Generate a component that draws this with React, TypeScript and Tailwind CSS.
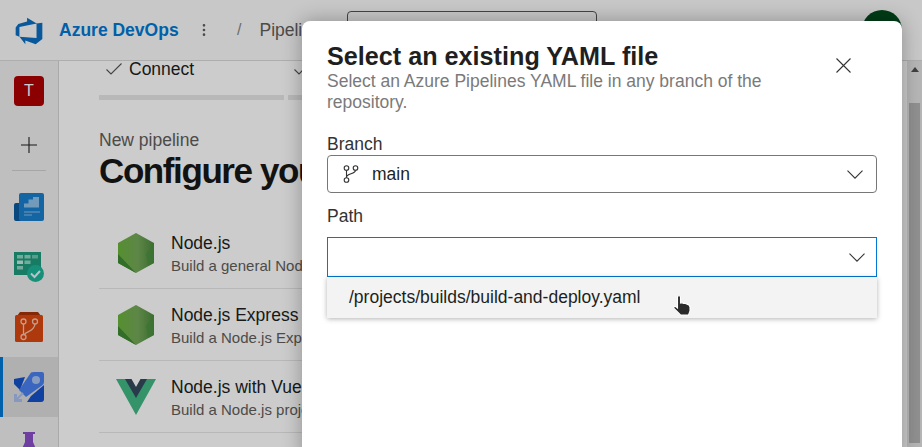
import { EllipsisVertical } from "lucide-react"

const templates = [
  { title: "Node.js", sub: "Build a general Node.js project with npm.", icon: "node" },
  { title: "Node.js Express Web App", sub: "Build a Node.js Express web app.", icon: "node" },
  { title: "Node.js with Vue", sub: "Build a Node.js project that uses Vue.", icon: "vue" },
]

function AzureLogo() {
  return (
    <svg width="30" height="30" viewBox="0 0 18 18">
      <path d="M17 4v9.740l-4 3.280-6.200-2.260V17L3.290 12.410l10.230.8V4.440zm-3.410.49L7.850 1v2.290L2.580 4.840 1 6.870v4.610l2.260 1V6.570z" fill="#0a6fc2" />
    </svg>
  )
}

function NodeIcon() {
  return (
    <svg width="36" height="40" viewBox="0 0 36 40">
      <defs>
        <linearGradient id="nodeg" x1="0" x2="1" y1="0" y2="0">
          <stop offset="0" stopColor="#6bb43c" />
          <stop offset="0.55" stopColor="#75a85a" />
          <stop offset="1" stopColor="#4b8a3c" />
        </linearGradient>
      </defs>
      <path d="M18 0 36 10v20L18 40 0 30V10z" fill="url(#nodeg)" />
      <path d="M0 21 18 40 0 30z" fill="#3f8a35" />
      <path d="M36 10v20l-6 3-2-12z" fill="#4a9040" opacity="0.7" />
    </svg>
  )
}

function VueIcon() {
  return (
    <svg width="40" height="36" viewBox="0 0 40 36">
      <path d="M0 0h15l5 9 5-9h15L20 36z" fill="#41b883" />
      <path d="M9 0h6.500L20 8l4.500-8H31L20 19z" fill="#34495e" />
    </svg>
  )
}

function Boards() {
  return (
    <svg width="30" height="28" viewBox="0 0 30 28">
      <rect x="0" y="10" width="12" height="18" rx="2" fill="#0a5a9e" />
      <rect x="5" y="0" width="25" height="28" rx="2" fill="#1a7fcc" />
      <path d="M10 14.500v-4h4.500V6.500h4.500V4h6v10.500z" fill="#8fc2ea" />
      <path d="M10 19h16M10 22h8" stroke="#8fc2ea" strokeWidth="1.200" />
    </svg>
  )
}

function TestBoard() {
  return (
    <svg width="30" height="30" viewBox="0 0 30 30">
      <rect x="0" y="0" width="27" height="23" fill="#1f9c7e" />
      <rect x="3" y="3" width="6" height="3.500" fill="#8fd6c2" />
      <rect x="10.500" y="3" width="6" height="3.500" fill="#8fd6c2" />
      <rect x="18" y="3" width="6" height="3.500" fill="#6cc6ae" />
      <rect x="3" y="8.500" width="6" height="3.500" fill="#c4ece0" />
      <rect x="10.500" y="8.500" width="6" height="3.500" fill="#8fd6c2" />
      <rect x="3" y="14" width="6" height="3.500" fill="#8fd6c2" />
      <circle cx="21.500" cy="21.500" r="8.500" fill="#1cb598" />
      <path d="m17 21.500 3.500 3.500 5.500-6" fill="none" stroke="#eef" strokeWidth="2" />
    </svg>
  )
}

function Repos() {
  return (
    <svg width="28" height="30" viewBox="0 0 28 30">
      <path d="M5 0h18l3 4v3H2V4z" fill="#a83208" />
      <rect x="0" y="3" width="28" height="27" rx="1.500" fill="#d9480f" />
      <g fill="none" stroke="#f6c4ad" strokeWidth="1.300">
        <circle cx="8.500" cy="9.500" r="2.500" />
        <circle cx="20" cy="9.500" r="2.500" />
        <circle cx="8.500" cy="25" r="2.500" />
        <path d="M8.500 12v10.500M9.500 22.500c1-3 10-3 10.500-10.500" />
      </g>
    </svg>
  )
}

function Pipelines() {
  return (
    <svg width="30" height="30" viewBox="0 0 30 30">
      <path d="M0 7 11 5 6 18 0 12z" fill="#1450c8" />
      <path d="M13 30h14q3 0 3-3V13L17 24z" fill="#1450c8" />
      <path d="M17 .5Q18 0 20 0h8q2 0 2 2v8q0 2-2 3.500L12 25l-7-7z" fill="#4a80f0" />
      <circle cx="22" cy="8" r="4" fill="#a8c4f2" />
      <path d="M0 22h3v5h5v3H0z" fill="#a9bff0" />
      <path d="m3 27 6-6" stroke="#a9bff0" strokeWidth="2" />
    </svg>
  )
}

function Flask() {
  return (
    <svg width="20" height="30" viewBox="0 0 20 30">
      <path d="M4 0h12v2h-2v8l6 14a3 3 0 0 1-3 4H3a3 3 0 0 1-3-4l6-14V2H4z" fill="#8a4fc8" />
    </svg>
  )
}

function BranchIcon() {
  return (
    <svg width="16" height="18" viewBox="0 0 16 18" fill="none" stroke="#333" strokeWidth="1.100">
      <circle cx="3.500" cy="3" r="2.300" />
      <circle cx="12.500" cy="3" r="2.300" />
      <circle cx="3.500" cy="15" r="2.300" />
      <path d="M3.500 5.300v7.400M12.500 5.300c0 4-9 3-9 7" />
    </svg>
  )
}

function Chevron() {
  return (
    <svg width="16" height="9" viewBox="0 0 16 9" fill="none" stroke="#333" strokeWidth="1.100" className="ml-auto">
      <path d="m.5.700 7.500 7.500L15.500.7" />
    </svg>
  )
}

function CheckMark({ className }: { className?: string }) {
  return (
    <svg width="16" height="12" viewBox="0 0 16 12" fill="none" stroke="#555" strokeWidth="1.100" className={className}>
      <path d="m.5 6.500 4.500 4.500L15.500.5" />
    </svg>
  )
}

function HandCursor() {
  return (
    <svg width="18" height="21" viewBox="0 0 18 21">
      <path d="M4.500 1.700c0-1.500 3-1.500 3 0V8l1.500-.2 1.500.6 1.500-.2 1.500.7c2 .5 3.500 1.500 3.500 3.400v3.700L15.500 20H7.500L1 13.500c-1-1.200.6-2.800 2-1.700l1.500 1.200z" fill="#2b2b2b" stroke="#fff" strokeWidth="1.100" />
    </svg>
  )
}

export default function App() {
  return (
    <div className="relative h-[447px] w-[922px] overflow-hidden bg-white font-['Liberation_Sans',sans-serif] text-[#201f1e]">
      <header className="flex h-[61px] items-center border-b border-[#dadada] bg-[#fbfbfb]">
        <div className="mt-[1px] mr-[15px] ml-[14px] flex">
          <AzureLogo />
        </div>
        <span className="w-[119px] text-[17.500px] font-bold whitespace-nowrap text-[#0078d4]">Azure DevOps</span>
        <EllipsisVertical size={16} className="ml-[18px] text-[#605e5c]" />
        <span className="ml-[25px] text-[16px] text-[#8a8886]">/</span>
        <span className="ml-[18px] w-[88px] text-[17.500px] text-[#605e5c]">Pipelines</span>
        <div className="mb-[1px] h-[38px] w-[250px] rounded-sm border border-[#555]" />
        <div className="ml-[265px] h-[40px] w-[40px] rounded-full bg-[#004b1c]" />
      </header>

      <div className="flex h-[386px]">
        <nav className="flex w-[59px] shrink-0 flex-col items-center overflow-hidden border-r border-[#d4d4d4] bg-[#efefef]">
          <div className="mt-[15px] flex h-[30px] w-[30px] shrink-0 items-center justify-center rounded-[4px] bg-[#ae0000] text-[16px] text-white">T</div>
          <svg width="16" height="16" viewBox="0 0 16 16" stroke="#201f1e" strokeWidth="1.100" className="mt-[31px] shrink-0">
            <path d="M8 0v16M0 8h16" />
          </svg>
          <div className="mt-[17px] h-px w-[34px] shrink-0 bg-[#d0d0d0]" />
          <div className="mt-[6px] flex h-[60px] w-full shrink-0 items-center justify-center"><Boards /></div>
          <div className="flex h-[60px] w-full shrink-0 items-center justify-center"><TestBoard /></div>
          <div className="flex h-[60px] w-full shrink-0 items-center justify-center"><Repos /></div>
          <div className="flex h-[60px] w-full shrink-0 items-center justify-center border-l-[3px] border-[#0078d4] bg-[#dcdcdc] pr-[3px]"><Pipelines /></div>
          <div className="flex h-[60px] w-full shrink-0 items-center justify-center"><Flask /></div>
        </nav>

        <main className="min-w-0 flex-1 overflow-hidden bg-white pl-[40px]">
          <div className="mb-[18px] flex h-[16px] items-center">
            <CheckMark className="ml-[7px]" />
            <span className="ml-[7px] text-[17.500px]">Connect</span>
            <CheckMark className="ml-[100px]" />
          </div>
          <div className="flex gap-[4px]">
            <div className="h-[5px] w-[185px] bg-[#e6e6e6]" />
            <div className="h-[5px] w-[185px] bg-[#e6e6e6]" />
          </div>
          <div className="mt-[30px] text-[17.500px] leading-[20px] text-[#605e5c]">New pipeline</div>
          <h1 className="mt-[1px] text-[35px] leading-[40px] font-bold tracking-[-1.400px] whitespace-nowrap text-[#171717]">Configure your pipeline</h1>
          <ul className="mt-[26px] w-[700px]">
            {templates.map((t) => (
              <li key={t.title} className="flex h-[72px] items-center border-b border-[#e6e6e6]">
                <div className="flex w-[72px] justify-center pl-[2px]">
                  {t.icon === "node" ? <NodeIcon /> : <VueIcon />}
                </div>
                <div className="pt-[1px]">
                  <div className="text-[17.500px] leading-[24px]">{t.title}</div>
                  <div className="mt-[1px] text-[15px] leading-[20px] text-[#605e5c]">{t.sub}</div>
                </div>
              </li>
            ))}
          </ul>
        </main>

        <div className="flex w-[15px] shrink-0 flex-col items-center bg-[#e4e4e4]">
          <div className="mt-[6px] h-0 w-0 border-x-[4px] border-b-[5px] border-x-transparent border-b-[#505050]" />
          <div className="mt-[31px] h-[340px] w-[11px] bg-[#b4b4b4]" />
        </div>
      </div>

      <div className="absolute inset-0 bg-black/20" />

      <div className="absolute top-[21px] left-[302px] h-[440px] w-[600px] rounded-lg bg-white px-[25px] pt-[20px] shadow-[0_0_20px_rgba(0,0,0,0.3)]">
        <div className="flex items-start justify-between">
          <div className="w-[480px]">
            <h2 className="text-[25.200px] leading-[30px] font-bold text-[#1f1f1f]">Select an existing YAML file</h2>
            <p className="text-[17.500px] leading-[21px] text-[#7a7a7a]">Select an Azure Pipelines YAML file in any branch of the repository.</p>
          </div>
          <button className="mt-[17px] mr-[26px]">
            <svg width="15" height="15" viewBox="0 0 15 15" stroke="#333" strokeWidth="1.100" className="block">
              <path d="m.5.500 14 14M14.500.5l-14 14" />
            </svg>
          </button>
        </div>
        <label className="mt-[21px] block text-[17.500px] leading-[21px] text-[#333]">Branch</label>
        <div className="flex h-[38px] w-[550px] items-center rounded-sm border border-[#777] pr-[13px] pl-[15px]">
          <BranchIcon />
          <span className="ml-[13px] text-[17.500px]">main</span>
          <Chevron />
        </div>
        <label className="mt-[13px] block text-[17.500px] leading-[21px] text-[#333]">Path</label>
        <div className="mt-[10px] flex h-[40px] w-[550px] items-center border border-[#0078d4] pr-[11px]">
          <Chevron />
        </div>
        <div className="relative flex h-[41px] w-[550px] items-center bg-[#f3f3f3] pl-[22px] text-[17.500px] shadow-[0_1px_5px_rgba(0,0,0,0.3)]">
          /projects/builds/build-and-deploy.yaml
          <div className="absolute top-[18px] left-[346px]"><HandCursor /></div>
        </div>
      </div>
    </div>
  )
}
